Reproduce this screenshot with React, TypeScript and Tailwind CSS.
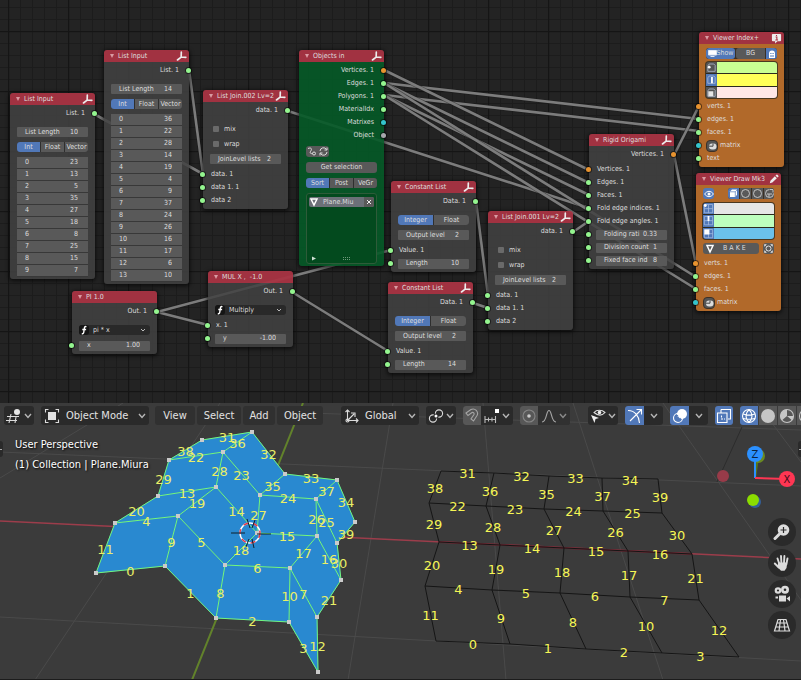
import type { ReactNode } from "react";

const LIME = "bg-[#94f58f]";
const ORANGE = "bg-[#e8932f]";
const CYAN = "bg-[#35c4cc]";
const GREY = "bg-[#a6a6ac]";

/* ------------------------------------------------------------------ */
/* Node building blocks                                                */
/* ------------------------------------------------------------------ */

function TripodIcon() {
  return (
    <svg viewBox="0 0 12 12" className="size-[11px] shrink-0" aria-hidden="true">
      <path d="M5.8 1.2 L5.6 6.6 L1.6 9.8 M5.6 6.6 L10.8 6.9" fill="none" stroke="#ececec" strokeWidth="1.8" strokeLinecap="round" />
    </svg>
  );
}

function InfoIcon() {
  return (
    <svg viewBox="0 0 12 12" className="size-[11px]" aria-hidden="true">
      <path d="M2 1h8a1 1 0 0 1 1 1v6a1 1 0 0 1-1 1H7l-2.500 2.500V9H2a1 1 0 0 1-1-1V2a1 1 0 0 1 1-1z" fill="#ededed" />
      <path d="M5 4.300h1.400V7.600M4.700 7.700h3M6 2.200v1.100" stroke="#ab3344" strokeWidth="1.200" fill="none" />
    </svg>
  );
}

function PencilIcon() {
  return (
    <svg viewBox="0 0 12 12" className="size-[10px]" aria-hidden="true">
      <path d="M1 11l.7-3L7 2.600 9.400 5 4 10.300zM7.800 1.900 8.900.8a.8.8 0 0 1 1.200 0L11.200 2a.8.8 0 0 1 0 1.200L10.100 4.300z" fill="#ededed" />
    </svg>
  );
}

type NodeProps = {
  title: string;
  place: string;
  tone?: "dark" | "green" | "orange";
  icon?: ReactNode;
  children: ReactNode;
};

function Node({ title, place, tone = "dark", icon, children }: NodeProps) {
  const body = tone === "green" ? "bg-[#045a27]/90" : tone === "orange" ? "bg-[#b1692a]" : "bg-[#424242]/85";
  return (
    <section className={`absolute w-[85px] overflow-visible rounded-[3px] shadow-[0_1px_4px_1px_rgba(0,0,0,0.65)] ${place}`}>
      <header className="flex h-3 items-center rounded-t-[3px] bg-[#a93443]/95 pr-[2px] pl-[6px]">
        <svg viewBox="0 0 4 4" className="mr-1 size-1 shrink-0" aria-hidden="true">
          <path d="M0 0h4L2 4z" fill="#d99aa2" />
        </svg>
        <h2 className="min-w-0 flex-1 whitespace-pre">{title}</h2>
        {icon}
      </header>
      <div className={`rounded-b-[3px] pt-[2px] pb-[2px] ${body}`}>{children}</div>
    </section>
  );
}

function Dot({ side, color }: { side: "in" | "out"; color: string }) {
  return <i className={`absolute top-1 size-[5px] rounded-full ring-1 ring-black/50 ${side === "in" ? "-left-[3px]" : "-right-[2px]"} ${color}`} />;
}

function Out({ label, color = LIME }: { label: string; color?: string }) {
  return (
    <div className="relative flex h-[13px] items-center justify-end pr-[10px] whitespace-nowrap">
      {label}
      <Dot side="out" color={color} />
    </div>
  );
}

function In({ label, color = LIME, children }: { label?: string; color?: string; children?: ReactNode }) {
  return (
    <div className={`relative flex h-[13px] items-center whitespace-nowrap ${children && !label ? "px-[7px]" : "pl-2"}`}>
      <Dot side="in" color={color} />
      {label ?? children}
    </div>
  );
}

function Field({ label, value, center = false }: { label: string; value: string; center?: boolean }) {
  return (
    <label className="flex h-[10px] w-full items-center rounded-[1px] bg-[#595959] pr-[10px] pl-2">
      <span className={`whitespace-nowrap ${center ? "" : "flex-1"}`}>{label}</span>
      <input defaultValue={value} className={`h-[9px] min-w-0 bg-transparent text-right leading-[9px] outline-none ${center ? "flex-1" : "w-6"}`} />
    </label>
  );
}

function Tabs({ items }: { items: string[] }) {
  return (
    <div className="flex h-[10px] gap-px overflow-hidden rounded-[3px] bg-[#2f2f2f]">
      {items.map((item, i) => (
        <button key={item} className={`flex flex-1 items-center justify-center ${i === 0 ? "bg-[#5178b8]" : "bg-[#595959]"}`}>
          {item}
        </button>
      ))}
    </div>
  );
}

function Check({ label }: { label: string }) {
  return (
    <label className="flex h-[10px] items-center gap-[5px] pl-[3px]">
      <input type="checkbox" className="size-[6px] appearance-none rounded-[1px] bg-[#6a6a6a] checked:bg-[#5178b8]" />
      {label}
    </label>
  );
}

function FormulaSelect({ label, value }: { label: string; value: string }) {
  return (
    <div className="flex h-[10px] items-center rounded-[3px] bg-[#292929] pr-1">
      <svg viewBox="0 0 10 10" className="size-[10px] shrink-0" aria-hidden="true">
        <rect width="10" height="10" rx="3" fill="#151515" />
        <path d="M7.400 1.800C5.800 1 5.400 2.400 5.200 4L4.800 7C4.600 8.600 4 9 2.800 8.500M3.300 4.500h3.800" fill="none" stroke="#fff" strokeWidth="1.400" />
      </svg>
      <select aria-label={label} className="h-[10px] min-w-0 flex-1 appearance-none bg-transparent pl-1 outline-none">
        <option>{value}</option>
      </select>
      <svg viewBox="0 0 6 4" className="h-1 w-[6px]" aria-hidden="true">
        <path d="M1 1l2 2 2-2" fill="none" stroke="#bbb" />
      </svg>
    </div>
  );
}

function ListInput({ place, values }: { place: string; values: number[] }) {
  return (
    <Node title="List Input" place={place} icon={<TripodIcon />}>
      <Out label="List. 1" />
      <div className="mt-[7px] flex flex-col gap-[5px] px-[7px]">
        <Field label="List Length" value={String(values.length)} />
        <Tabs items={["Int", "Float", "Vector"]} />
        <div>
          {values.map((v, i) => (
            <label key={i} className="flex h-3 items-center border-b border-[#383838] bg-[#595959] pr-[10px] pl-2">
              <span className="flex-1">{i}</span>
              <input defaultValue={v} className="h-[9px] w-8 bg-transparent text-right leading-[9px] outline-none" />
            </label>
          ))}
        </div>
      </div>
    </Node>
  );
}

function ListJoin({ place, title }: { place: string; title: string }) {
  return (
    <Node title={title} place={place} icon={<TripodIcon />}>
      <Out label="data. 1" />
      <div className="mt-[7px] mb-1 flex flex-col gap-[5px] px-[7px]">
        <Check label="mix" />
        <Check label="wrap" />
        <Field label="JoinLevel lists" value="2" />
      </div>
      <In label="data. 1" />
      <In label="data 1. 1" />
      <In label="data 2" />
    </Node>
  );
}

function ConstantList({ place, length }: { place: string; length: string }) {
  return (
    <Node title="Constant List" place={place} icon={<TripodIcon />}>
      <Out label="Data. 1" />
      <div className="mt-[7px] mb-1 flex flex-col gap-[5px] px-[7px]">
        <Tabs items={["Integer", "Float"]} />
        <Field label="Output level" value="2" />
      </div>
      <In label="Value. 1" />
      <In>
        <Field label="Length" value={length} />
      </In>
    </Node>
  );
}

function MatrixIn() {
  return (
    <In color={CYAN}>
      <button className="flex items-center gap-[2px]">
        <svg viewBox="0 0 12 12" className="size-3" aria-hidden="true">
          <rect x=".5" y=".5" width="11" height="11" rx="3.500" fill="#555" stroke="#3d3127" />
          <rect x="3" y="3.500" width="7.500" height="6" rx="3" fill="#ddd" />
          <path d="M3 6.200h4V3.500" stroke="#444" fill="none" />
        </svg>
        matrix
      </button>
    </In>
  );
}

function SwatchIcon({ kind, active }: { kind: "vert" | "edge" | "face"; active: boolean }) {
  return (
    <svg viewBox="0 0 12 12" className={`size-full ${active ? "bg-[#5178b8]" : "bg-[#555]"}`} aria-hidden="true">
      <path d="M3.500 2h5L10 3.500V10H2V4z" fill="none" stroke="#b9c4d8" strokeWidth=".8" />
      {kind === "vert" && <circle cx="3.500" cy="5.500" r="1.500" fill="#fff" />}
      {kind === "edge" && <path d="M6.500 3v7" stroke="#fff" strokeWidth="2" />}
      {kind === "face" && <path d="M2.500 4.500h5.500V10H2.500z" fill="#e6e6e6" />}
    </svg>
  );
}

function GridSwatchIcon({ kind }: { kind: "vert" | "edge" | "face" }) {
  return (
    <svg viewBox="0 0 12 12" className="size-full bg-[#5178b8]" aria-hidden="true">
      <path d="M1.500 1.500h9v9h-9zM6 1.500v9M1.500 6h9" fill="none" stroke="#a9bfe2" strokeWidth=".8" />
      {kind === "vert" && <circle cx="2.500" cy="2.500" r="1.600" fill="#fff" />}
      {kind === "edge" && <path d="M6 1v5.500" stroke="#fff" strokeWidth="2" />}
      {kind === "face" && <path d="M1.500 1.500H7V7H1.500z" fill="#fff" />}
    </svg>
  );
}

const KINDS = ["vert", "edge", "face"] as const;

function Swatches({ colors, grid }: { colors: string[]; grid?: boolean }) {
  return (
    <div className="flex h-[36px] flex-col gap-px overflow-hidden rounded-[3px] bg-[#2c2a20] ring-1 ring-[#4a3820]">
      {colors.map((c, i) => (
        <div key={c} className="flex min-h-0 flex-1">
          <span className="w-[11px]">{grid ? <GridSwatchIcon kind={KINDS[i]} /> : <SwatchIcon kind={KINDS[i]} active={i === 1} />}</span>
          <button aria-label={`${KINDS[i]} colour`} className={`flex-1 ${c}`} />
        </div>
      ))}
    </div>
  );
}

/* ------------------------------------------------------------------ */
/* Node editor                                                         */
/* ------------------------------------------------------------------ */

const LINKS = [
  [94, 114, 203, 174], [189, 70, 203, 174], [288, 111, 589, 208],
  [384, 83, 699, 119], [384, 95, 699, 131], [384, 70, 589, 170],
  [384, 83, 589, 183], [384, 95, 589, 195], [384, 83, 696, 277],
  [384, 95, 696, 289], [674, 155, 699, 106], [674, 155, 696, 264],
  [573, 232, 589, 221], [157, 312, 208, 325], [157, 312, 391, 250],
  [292, 292, 388, 351], [476, 202, 488, 295], [473, 303, 488, 308],
];

function Links() {
  return (
    <svg className="pointer-events-none absolute inset-0 size-full" aria-hidden="true">
      <defs>
        <pattern id="grid" x="8" y="31" width="60" height="60" patternUnits="userSpaceOnUse">
          <path d="M12.500 0v60M24.500 0v60M36.500 0v60M48.500 0v60M0 12.500h60M0 24.500h60M0 36.500h60M0 48.500h60" stroke="#1c1c1c" />
          <path d="M.5 0v60M0 .5h60" stroke="#151515" strokeWidth="1.600" />
        </pattern>
      </defs>
      <rect width="100%" height="100%" fill="url(#grid)" />
      {LINKS.map(([a, b, c, d], i) => (
        <g key={i}>
          <path d={`M${a} ${b}L${c} ${d}`} stroke="#1c1c1c" strokeWidth="4" opacity=".5" />
          <path d={`M${a} ${b}L${c} ${d}`} stroke="#7c7c7c" strokeWidth="2.600" />
        </g>
      ))}
    </svg>
  );
}

function NodeEditor() {
  return (
    <main className="relative h-[403px] overflow-hidden bg-[#232323] text-[7px] leading-[9px] text-[#dedede]">
      <Links />
      <ListInput place="left-[10px] top-[93px]" values={[23, 13, 5, 35, 27, 18, 8, 25, 15, 7]} />
      <ListInput place="left-[104px] top-[50px]" values={[36, 22, 28, 14, 19, 4, 9, 37, 24, 26, 16, 17, 6, 10]} />
      <ListJoin place="left-[203px] top-[90px]" title="List Join.002 Lv=2" />

      <Node title="Objects in" place="left-[299px] top-[50px]" tone="green" icon={<TripodIcon />}>
        <Out label="Vertices. 1" color={ORANGE} />
        <Out label="Edges. 1" />
        <Out label="Polygons. 1" />
        <Out label="MaterialIdx" />
        <Out label="Matrixes" color={CYAN} />
        <Out label="Object" color={GREY} />
        <div className="mt-1 flex flex-col gap-[5px] px-[7px]">
          <div className="flex h-[11px] w-[23px] overflow-hidden rounded-[3px] bg-[#595959]">
            <button aria-label="Animate" className="flex-1">
              <svg viewBox="0 0 11 11" className="size-[11px]">
                <path d="M2 2.500c4-1.500 4 1 2.500 3C3.500 7 5 8 6.500 7.500" fill="none" stroke="#ddd" />
                <circle cx="8" cy="7.500" r="1.500" fill="none" stroke="#ddd" />
              </svg>
            </button>
            <button aria-label="Refresh" className="flex-1">
              <svg viewBox="0 0 11 11" className="size-[11px]">
                <path d="M2 5a3.500 3.500 0 0 1 6.500-1.500M9 1.500v2.500H6.500M9 6a3.500 3.500 0 0 1-6.500 1.500M2 9.500V7h2.500" fill="none" stroke="#ddd" />
              </svg>
            </button>
          </div>
          <button className="flex h-[11px] items-center justify-center rounded-[3px] bg-[#595959]">Get selection</button>
          <Tabs items={["Sort", "Post", "VeGr"]} />
          <div className="flex h-[71px] flex-col rounded-[3px] border border-[#2e5b39] bg-[#034a1e] px-[2px] pt-[3px] pb-px">
            <div className="flex h-[10px] items-center overflow-hidden rounded-[2px] bg-[#6c7078]">
              <svg viewBox="0 0 10 10" className="mr-1 size-[10px]" aria-hidden="true">
                <path d="M2 2h6L5 8z" fill="none" stroke="#fff" strokeWidth="1.500" />
              </svg>
              <span className="flex-1">Plane.Miu</span>
              <button aria-label="Remove" className="flex h-full w-[10px] items-center justify-center bg-[#595959]">
                <svg viewBox="0 0 6 6" className="size-[6px]">
                  <path d="M1 1l4 4M5 1L1 5" stroke="#eee" />
                </svg>
              </button>
            </div>
            <svg viewBox="0 0 62 8" className="mt-auto h-2 w-[62px]" aria-hidden="true">
              <path d="M3 2.500v4l4-2z" fill="#cfe0d3" />
              <path d="M34 3.500h8M34 5.500h8" stroke="#6d9a7a" strokeDasharray="1 1" />
            </svg>
          </div>
        </div>
      </Node>

      <Node title="PI 1.0" place="left-[72px] top-[291px]">
        <Out label="Out. 1" />
        <div className="mt-[7px] mb-1 px-[7px]">
          <FormulaSelect label="Function" value="pi * x" />
        </div>
        <In>
          <Field label="x" value="1.00" />
        </In>
      </Node>

      <Node title="MUL X ,  -1.0" place="left-[208px] top-[271px]">
        <Out label="Out. 1" />
        <div className="mt-[7px] mb-1 px-[7px]">
          <FormulaSelect label="Operation" value="Multiply" />
        </div>
        <In label="x. 1" />
        <In>
          <Field label="y" value="-1.00" />
        </In>
      </Node>

      <ConstantList place="left-[391px] top-[181px]" length="10" />
      <ConstantList place="left-[388px] top-[282px]" length="14" />
      <ListJoin place="left-[488px] top-[211px]" title="List Join.001 Lv=2" />

      <Node title="Rigid Origami" place="left-[589px] top-[134px]" icon={<TripodIcon />}>
        <Out label="Vertices. 1" color={ORANGE} />
        <div className="mt-[2px]">
          <In label="Vertices. 1" color={ORANGE} />
          <In label="Edges. 1" />
          <In label="Faces. 1" />
          <In label="Fold edge indices. 1" />
          <In label="Fold edge angles. 1" />
          <In>
            <Field label="Folding rati" value="0.33" center />
          </In>
          <In>
            <Field label="Division count" value="1" center />
          </In>
          <In>
            <Field label="Fixed face ind" value="8" center />
          </In>
        </div>
      </Node>

      <Node title="Viewer Index+" place="left-[699px] top-[32px]" tone="orange" icon={<InfoIcon />}>
        <div className="mt-[2px] mb-[2px] flex flex-col gap-[3px] px-[7px]">
          <div className="flex h-[11px] gap-px overflow-hidden rounded-[3px] bg-[#3a3025]">
            <button className="flex w-[29px] items-center justify-center rounded-[3px] bg-[#5178b8]">
              <svg viewBox="0 0 9 9" className="size-[9px] shrink-0" aria-hidden="true">
                <path d="M.5 1.500h8V6h-8zM2.500 7.500h4" fill="#fff" stroke="#dfe8f5" />
              </svg>
              Show
            </button>
            <button className="flex-1 rounded-l-[3px] bg-[#595959]">BG</button>
            <button aria-label="Ghost" className="flex w-[11px] items-center justify-center bg-[#5178b8]">
              <svg viewBox="0 0 8 8" className="size-2">
                <path d="M1 8V3.500a3 3 0 0 1 6 0V8z" fill="#fff" />
                <path d="M2.300 3.500h1.200M4.500 3.500h1.200M2 6h4" stroke="#5178b8" />
              </svg>
            </button>
          </div>
          <Swatches colors={["bg-[#c9ff93]", "bg-[#ffff58]", "bg-[#ffe7e6]"]} />
        </div>
        <In label="verts. 1" color={ORANGE} />
        <In label="edges. 1" />
        <In label="faces. 1" />
        <MatrixIn />
        <In label="text" />
      </Node>

      <Node title="Viewer Draw Mk3" place="left-[696px] top-[173px]" tone="orange" icon={<PencilIcon />}>
        <div className="mt-px mb-[3px] flex flex-col gap-[4px] px-[7px]">
          <div className="flex h-[11px] items-center justify-between">
            <button aria-label="Visible" className="flex h-full w-[11px] items-center justify-center rounded-[3px] bg-[#5178b8]">
              <svg viewBox="0 0 10 8" className="h-2 w-[10px]">
                <path d="M.5 4Q5-1.500 9.500 4 5 9.500.5 4z" fill="none" stroke="#fff" />
                <circle cx="5" cy="4" r="1.500" fill="#fff" />
              </svg>
            </button>
            <div className="flex h-full w-[46px] gap-px overflow-hidden rounded-[3px] bg-[#3a3025]">
              <button aria-label="Cube" className="flex-1 bg-[#5178b8]">
                <svg viewBox="0 0 11 11" className="size-[11px]">
                  <path d="M2 3.500L4 1.500h5v5L7.500 9H2z" fill="#fff" />
                  <path d="M2 3.800h5.300V9M7.300 3.800L9 2" stroke="#5178b8" fill="none" strokeWidth=".7" />
                </svg>
              </button>
              {["Smooth", "Round"].map((n) => (
                <button key={n} aria-label={n} className="flex-1 bg-[#595959]">
                  <svg viewBox="0 0 11 11" className="size-[11px]">
                    <circle cx="5.500" cy="5.500" r="4" fill="none" stroke="#c4c4c4" />
                  </svg>
                </button>
              ))}
              <button aria-label="Material" className="flex-1 bg-[#595959]">
                <svg viewBox="0 0 11 11" className="size-[11px]">
                  <path d="M5.500 1.500a4 4 0 1 0 4 4M6 1.500h3v3M3 6h5M5 6v3" fill="none" stroke="#c4c4c4" />
                </svg>
              </button>
            </div>
          </div>
          <Swatches grid colors={["bg-[#e6e6e6]", "bg-[#bdffbe]", "bg-[#6bc1ea]"]} />
          <div className="flex h-[11px] gap-1">
            <button className="flex flex-1 items-center rounded-[3px] bg-[#595959]">
              <svg viewBox="0 0 11 11" className="mr-2 ml-px size-[11px]" aria-hidden="true">
                <path d="M3 2.500h6L6 9z" fill="none" stroke="#fff" strokeWidth="1.500" />
              </svg>
              B A K E
            </button>
            <button aria-label="Frame" className="w-[11px] rounded-[3px] bg-[#595959]">
              <svg viewBox="0 0 11 11" className="size-[11px]">
                <circle cx="5.500" cy="5.500" r="2.500" fill="none" stroke="#ddd" />
                <path d="M1.500 3.500v-2h2M7.500 1.500h2v2M9.500 7.500v2h-2M3.500 9.500h-2v-2M2 2l1.500 1.500M9 2L7.500 3.500M2 9l1.500-1.500M9 9L7.500 7.500" fill="none" stroke="#ddd" strokeWidth=".8" />
              </svg>
            </button>
          </div>
        </div>
        <In label="verts. 1" color={ORANGE} />
        <In label="edges. 1" />
        <In label="faces. 1" />
        <MatrixIn />
      </Node>
    </main>
  );
}

/* ------------------------------------------------------------------ */
/* 3D viewport                                                         */
/* ------------------------------------------------------------------ */

type Grid = [number, number][][];

const FOLDED: Grid = [
  [[96, 170], [165, 163], [216, 215], [289, 219], [318, 269]],
  [[115, 120], [178, 113], [225, 162], [290, 165], [317, 214]],
  [[158, 93], [216, 84], [257, 130], [317, 133], [341, 177]],
  [[169, 57], [223, 49], [260, 92], [316, 96], [337, 140]],
  [[202, 37], [252, 29], [285, 71], [337, 77], [355, 119]],
];

const FLAT: Grid = [
  [[436, 238], [510, 241], [586, 246], [662, 250], [739, 254]],
  [[425, 183], [492, 187], [560, 190], [630, 194], [699, 197]],
  [[439, 139], [500, 142], [564, 145], [628, 148], [692, 151]],
  [[429, 100], [486, 103], [544, 106], [603, 108], [662, 110]],
  [[441, 68], [494, 70], [549, 73], [602, 75], [658, 76]],
];

const ACROSS = [[0, 1, 2, 3], [4, 5, 6, 7], [13, 14, 15, 16], [22, 23, 24, 25], [31, 32, 33, 34]];
const UP = [[11, 9, 8, 10, 12], [20, 19, 18, 17, 21], [29, 28, 27, 26, 30], [38, 36, 35, 37, 39]];

function Mesh({ points, folded = false }: { points: Grid; folded?: boolean }) {
  const edges: { n: number; a: [number, number]; b: [number, number] }[] = [];
  ACROSS.forEach((row, r) => row.forEach((n, c) => edges.push({ n, a: points[r][c], b: points[r][c + 1] })));
  UP.forEach((row, r) => row.forEach((n, c) => edges.push({ n, a: points[r][c], b: points[r + 1][c] })));
  const faces = folded
    ? points.slice(0, 4).flatMap((row, r) => row.slice(0, 4).map((p, c) => [p, row[c + 1], points[r + 1][c + 1], points[r + 1][c]].join(" ")))
    : [];
  return (
    <g>
      {faces.map((f) => (
        <polygon key={f} points={f} fill="#2989d0" stroke="#2989d0" strokeWidth=".5" />
      ))}
      {edges.map(({ n, a, b }) => (
        <path key={n} d={`M${a}L${b}`} stroke={folded ? "#74f77c" : "#151515"} strokeWidth="1" />
      ))}
      {folded && points.flat().map(([x, y]) => <rect key={`${x},${y}`} x={x - 2} y={y - 2} width="4" height="4" fill="#cbcbcb" />)}
      {edges.map(({ n, a, b }) => (
        <text
          key={n}
          x={(a[0] + b[0]) / 2}
          y={(a[1] + b[1]) / 2 + 6}
          textAnchor="middle"
          className={`font-['DejaVu_Sans',sans-serif] text-[13px] ${folded ? "fill-[#e9ef66]" : "fill-[#f6f655]"}`}
        >
          {n}
        </text>
      ))}
    </g>
  );
}

function Scene() {
  return (
    <svg className="absolute inset-0 size-full" role="img" aria-label="3D viewport">
      <path
        d="M220 0L35 277M123 0L0 75M393 0L348 277M483 0L506 277M573 0L663 277M663 0L801 197M757 0L801 59M0 49L801 83M0 214L801 258M280 9L801 27"
        stroke="#4a4a4a"
        fill="none"
      />
      <path d="M742 24L717 79" stroke="#2c2c2c" />
      <path d="M0 118L801 156" stroke="#9c3d4b" strokeWidth="1.500" />
      <path d="M303 0L192 277" stroke="#62822b" strokeWidth="2" />
      <path d="M439 139L692 151" stroke="#6a2832" strokeWidth="2" />
      <Mesh points={FLAT} />
      <Mesh points={FOLDED} folded />
      <circle cx="250" cy="130" r="10" fill="none" stroke="#fff" strokeWidth="1.500" />
      <circle cx="250" cy="130" r="10" fill="none" stroke="#e03c4a" strokeWidth="1.500" strokeDasharray="5 5" />
      <path d="M231 130h14M257 131h14M247 116l3 9M255 117l-3 8M249 136l-3 8M252 136l2 9" stroke="#10202c" />

      <path d="M755 75L758 54" stroke="#55751e" strokeWidth="2" />
      <circle cx="758" cy="53" r="7" fill="#6a8a22" />
      <circle cx="723" cy="73" r="6" fill="#983b49" />
      <circle cx="755" cy="99" r="6" fill="#335f99" />
      <circle cx="753" cy="97" r="6" fill="#8bdc00" />
      <path d="M755 75V51" stroke="#2b90ff" strokeWidth="2" />
      <path d="M755 75L787 76" stroke="#ff3653" strokeWidth="2" />
      <circle cx="755" cy="51" r="8" fill="#2b90ff" />
      <circle cx="787" cy="76" r="8" fill="#ff3653" />
      <text x="755" y="55" textAnchor="middle" className="fill-[#0b2440] text-[11px]">Z</text>
      <text x="787" y="80" textAnchor="middle" className="fill-[#400b18] text-[11px]">X</text>
    </svg>
  );
}

function Chevron() {
  return (
    <svg viewBox="0 0 8 6" className="h-[6px] w-2 shrink-0" aria-hidden="true">
      <path d="M1 1l3 3.500L7 1" fill="none" stroke="#b5b5b5" strokeWidth="1.400" />
    </svg>
  );
}

function Glyph({ children }: { children: ReactNode }) {
  return (
    <svg viewBox="0 0 16 16" className="size-4 shrink-0" fill="none" stroke="#dcdcdc" strokeWidth="1.100" aria-hidden="true">
      {children}
    </svg>
  );
}

function Group({ width, children }: { width: string; children: ReactNode }) {
  return <div className={`flex h-[19px] shrink-0 items-stretch overflow-hidden rounded-[3px] bg-[#2a2a2a] ${width}`}>{children}</div>;
}

function Tool({ label, tone = "", children }: { label: string; tone?: string; children: ReactNode }) {
  return (
    <button aria-label={label} className={`flex flex-1 items-center justify-center gap-[2px] ${tone}`}>
      {children}
    </button>
  );
}

const BLUE = "bg-[#5178b8]";

function Toolbar() {
  return (
    <div className="relative flex items-center overflow-hidden pt-[3px] pl-1 text-[11px] leading-4 text-[#e2e2e2]">
      <Group width="mr-[7px] w-[30px]">
        <Tool label="Editor type">
          <Glyph>
            <path d="M1 8.500h12M0 12.500h11M5 6L3 15M10 9l-1 6" />
            <circle cx="11" cy="4" r="3" fill="#e6e6e6" stroke="none" />
          </Glyph>
          <Chevron />
        </Tool>
      </Group>
      <Group width="mr-[6px] w-[108px]">
        <label className="flex w-full items-center pr-[3px] pl-[3px]">
          <Glyph>
            <path d="M1.500 4.500v-3h3M11.500 1.500h3v3M14.500 11.500v3h-3M4.500 14.500h-3v-3" />
            <rect x="4" y="4" width="8" height="8" fill="#e2e2e2" stroke="none" />
          </Glyph>
          <select aria-label="Mode" className="min-w-0 flex-1 appearance-none bg-transparent pl-[6px] outline-none">
            <option>Object Mode</option>
          </select>
          <Chevron />
        </label>
      </Group>
      <nav className="mr-[18px] flex h-[19px] gap-[2px]">
        <button className="w-10 rounded-[3px] bg-[#303030]">View</button>
        <button className="w-[44px] rounded-[3px] bg-[#303030]">Select</button>
        <button className="w-8 rounded-[3px] bg-[#303030]">Add</button>
        <button className="w-[46px] rounded-[3px] bg-[#303030]">Object</button>
      </nav>
      <Group width="mr-[7px] w-[78px]">
        <label className="flex w-full items-center pr-[3px] pl-[3px]">
          <Glyph>
            <path d="M3.500 2v10.500H14M1.500 4l2-2 2 2M12 10.500l2 2-2 2M4 12l6-6M7 5h4v4" />
            <circle cx="3.500" cy="12.500" r="1.500" />
          </Glyph>
          <select aria-label="Transform orientation" className="min-w-0 flex-1 appearance-none bg-transparent pl-[5px] outline-none">
            <option>Global</option>
          </select>
          <Chevron />
        </label>
      </Group>
      <Group width="mr-[7px] w-[30px]">
        <Tool label="Pivot point">
          <Glyph>
            <path d="M6.800 9.400A3.600 3.600 0 1 1 8 5.200M9.200 6.600A3.600 3.600 0 1 1 8 10.800" transform="rotate(-45 8 8)" stroke="none" />
            <circle cx="5" cy="10.500" r="3.600" />
            <circle cx="11" cy="5.500" r="3.600" />
            <circle cx="8" cy="8" r="2.600" fill="#2a2a2a" stroke="none" />
            <circle cx="8" cy="8" r="1.500" fill="#fff" stroke="none" />
          </Glyph>
          <Chevron />
        </Tool>
      </Group>
      <Group width="mr-[7px] w-[50px]">
        <span className="flex w-[18px] bg-[#575757]">
          <Tool label="Snap">
            <Glyph>
              <path d="M2 5l5-3.500c4-2 8 2.500 6 6L9.500 13l-2.500-2L10 6.500C10.500 5 9 4 8 4.500L4 7.500z" stroke="#a5a5a5" />
            </Glyph>
          </Tool>
        </span>
        <Tool label="Snap to">
          <Glyph>
            <path d="M1 8v7M4.500 9.500v4M8 9.500v4M11.500 8v7M1 11.500h11" stroke="#bcbcbc" />
            <rect x="11" y="1" width="4" height="4" fill="#fff" stroke="none" />
          </Glyph>
          <Chevron />
        </Tool>
      </Group>
      <Group width="mr-[18px] w-[50px]">
        <span className="flex w-[18px] bg-[#575757]">
          <Tool label="Proportional editing">
            <Glyph>
              <circle cx="8" cy="8" r="6" stroke="#858585" />
              <circle cx="8" cy="8" r="1.800" fill="#ccc" stroke="none" />
            </Glyph>
          </Tool>
        </span>
        <span className="flex flex-1 bg-[#353535] opacity-70">
          <Tool label="Falloff">
            <Glyph>
              <path d="M1 14C6 14 5 2.500 8 2.500S10 14 15 14" />
            </Glyph>
            <Chevron />
          </Tool>
        </span>
      </Group>
      <Group width="mr-[7px] w-[30px]">
        <Tool label="Object visibility">
          <Glyph>
            <path d="M4 4.500C6.500 1.500 12 1.500 15 4.500 12 8 8 8 4 4.500z" />
            <circle cx="9.500" cy="4.500" r="1.800" fill="#eee" stroke="none" />
            <path d="M1 7l8 3-3.500 1L4.500 15z" fill="#eee" stroke="none" />
          </Glyph>
          <Chevron />
        </Tool>
      </Group>
      <Group width="mr-[7px] w-[38px]">
        <Tool label="Gizmos" tone={BLUE}>
          <Glyph>
            <path d="M1 2.500C8 2.500 12 8 12.500 15M3 13L14 2M9.500 1.500H14.500V6.500" stroke="#fff" />
          </Glyph>
        </Tool>
        <Tool label="Gizmo options">
          <Chevron />
        </Tool>
      </Group>
      <Group width="mr-[7px] w-[38px]">
        <Tool label="Overlays" tone={BLUE}>
          <Glyph>
            <circle cx="6" cy="10" r="4.500" stroke="#fff" />
            <circle cx="10" cy="6" r="5" fill="#fff" stroke="none" />
            <path d="M5.500 7a5 5 0 0 0 4 4" stroke="#5178b8" strokeDasharray="1 1" />
          </Glyph>
        </Tool>
        <Tool label="Overlay options">
          <Chevron />
        </Tool>
      </Group>
      <Group width="mr-[7px] w-[18px]">
        <Tool label="X-ray" tone={BLUE}>
          <Glyph>
            <path d="M5 1.500h9.500V11H12M5 5V1.500M1.500 5H11v9.500H1.500z" stroke="#fff" />
            <path d="M5.500 7.500v3.500H9" stroke="#fff" strokeDasharray="2 1" />
          </Glyph>
        </Tool>
      </Group>
      <div className="flex h-[19px] shrink-0 gap-px overflow-hidden rounded-l-[3px]">
        <button aria-label="Wireframe" className="w-[18px] bg-[#5178b8] px-px">
          <Glyph>
            <circle cx="8" cy="8" r="6.500" stroke="#fff" />
            <path d="M8 1.500c-4 4-4 9 0 13M8 1.500c4 4 4 9 0 13M2 6c4 1.500 8 1.500 12 0M2 10.500c4 1 8 1 12 0" stroke="#fff" />
          </Glyph>
        </button>
        <button aria-label="Solid" className="w-[18px] bg-[#575757] px-px">
          <Glyph>
            <circle cx="8" cy="8" r="7" fill="#c6c6c6" stroke="none" />
          </Glyph>
        </button>
        <button aria-label="Material preview" className="w-[18px] bg-[#575757] px-px">
          <Glyph>
            <circle cx="8" cy="8" r="6.500" stroke="#c6c6c6" />
            <path d="M8 8V1.500A6.500 6.500 0 0 0 3 12.200zM8 8l5 4.200A6.500 6.500 0 0 0 14.500 8z" fill="#c6c6c6" stroke="none" />
          </Glyph>
        </button>
        <button aria-label="Rendered" className="w-[18px] bg-[#575757] px-px">
          <Glyph>
            <circle cx="8" cy="8" r="6.500" stroke="#c6c6c6" />
          </Glyph>
        </button>
      </div>
    </div>
  );
}

function NavButton({ label, children }: { label: string; children: ReactNode }) {
  return (
    <button aria-label={label} className="flex size-7 items-center justify-center rounded-full bg-[#2a2a2a]">
      <svg viewBox="0 0 18 18" className="size-[18px]">{children}</svg>
    </button>
  );
}

function Viewport() {
  return (
    <section className="relative h-[277px] overflow-hidden border-b border-[#1c1c1c] bg-[#3b3b3b]">
      <Scene />
      <Toolbar />
      <div className="relative mt-3 ml-[15px] flex flex-col gap-1 text-[11px] leading-4 text-white [text-shadow:1px_1px_2px_black]">
        <p>User Perspective</p>
        <p>(1) Collection | Plane.Miura</p>
      </div>
      <div className="absolute top-[115px] right-[5px] flex flex-col gap-[3px]">
        <NavButton label="Zoom">
          <circle cx="10.500" cy="7" r="5.800" fill="#dcdcdc" />
          <path d="M10.500 4v6M7.500 7h6" stroke="#2a2a2a" strokeWidth="1.200" />
          <path d="M6.500 11L2 15.500" stroke="#dcdcdc" strokeWidth="3" strokeLinecap="round" />
        </NavButton>
        <NavButton label="Pan">
          <path d="M4.500 4.500l1.700 5M8 2l.4 7M11.400 2l-.4 7M14.500 4.500l-1.200 6M1.800 9.500l4 4" stroke="#dcdcdc" strokeWidth="1.900" strokeLinecap="round" />
          <path d="M5.200 8.500h9l-.7 5.500-2 2.800H8L4.500 13z" fill="#dcdcdc" />
        </NavButton>
        <NavButton label="Camera">
          <circle cx="5" cy="5.500" r="3.300" fill="#dcdcdc" />
          <circle cx="12" cy="4.800" r="4" fill="#dcdcdc" />
          <circle cx="5" cy="5.500" r="1.100" fill="#2a2a2a" />
          <circle cx="12" cy="4.800" r="1.300" fill="#2a2a2a" />
          <path d="M6 10.500h7v6H6zM13.500 13.500l3.500-2.500v5.500zM2.500 11.500h2.500v2H2.500z" fill="#dcdcdc" />
        </NavButton>
        <NavButton label="Perspective">
          <path d="M5 3.500h8l3.500 11.500h-15zM4 7h10M3 11h12M7.500 3.500L6 15M10.500 3.500L12 15" fill="none" stroke="#dcdcdc" strokeWidth="1.200" />
        </NavButton>
      </div>
      <button aria-label="Open tool shelf" className="absolute top-[38px] left-0 flex h-4 w-[3px] items-center rounded-r-[3px] bg-[#2a2a2a]">
        <i className="h-px w-[2px] bg-[#aaa]" />
      </button>
      <button aria-label="Open sidebar" className="absolute top-[38px] right-0 flex h-4 w-[3px] items-center justify-end rounded-l-[3px] bg-[#2a2a2a]">
        <i className="h-px w-[2px] bg-[#aaa]" />
      </button>
    </section>
  );
}

export default function App() {
  return (
    <div className="overflow-hidden bg-[#1c1c1c] font-['DejaVu_Sans_Condensed','DejaVu_Sans',sans-serif]">
      <NodeEditor />
      <Viewport />
    </div>
  );
}
